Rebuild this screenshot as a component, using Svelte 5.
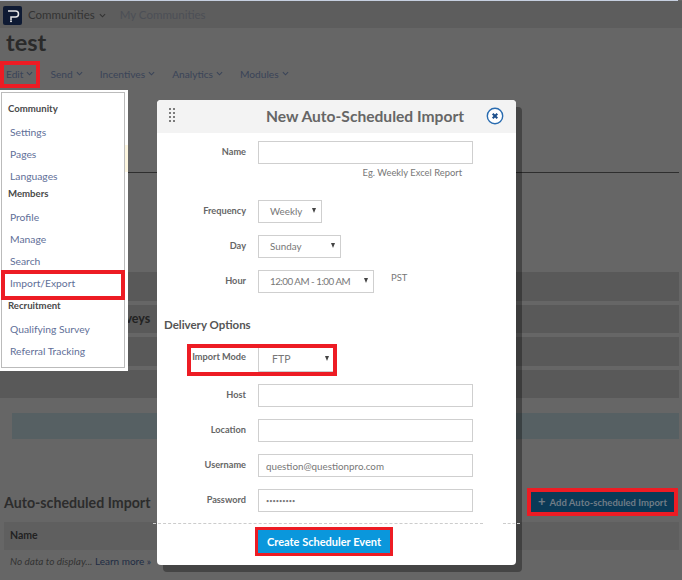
<script>
  const nav = ['Edit', 'Send', 'Incentives', 'Analytics', 'Modules'];
  const menu = [
    { head: 'Community', items: ['Settings', 'Pages', 'Languages'] },
    { head: 'Members', items: ['Profile', 'Manage', 'Search', 'Import/Export'] },
    { head: 'Recruitment', items: ['Qualifying Survey', 'Referral Tracking'] }
  ];
  const dots = [0, 1, 2, 3, 4, 5, 6, 7];
</script>

<div class="page">
  <div class="topline"></div>
  <header class="topbar">
    <svg class="logo" viewBox="0 0 19 19" aria-hidden="true">
      <rect width="19" height="19" rx="2" fill="#0e1a33" />
      <path d="M5 5h7.5a2.5 2.5 0 0 1 0 6H8v3" fill="none" stroke="#e6e6e6" stroke-width="1.5" />
      <circle cx="8" cy="15.2" r="1" fill="#e6e6e6" />
    </svg>
    <span class="brand">Communities</span>
    <svg class="chev brandchev" viewBox="0 0 8 5"><path d="M1 1l3 3 3-3" /></svg>
    <span class="mine">My Communities</span>
  </header>

  <h1 class="title">test</h1>

  <nav class="nav">
    {#each nav as item, i}
      <span class="navitem" class:marked={i === 0}>
        {item}
        <svg class="chev" viewBox="0 0 8 5"><path d="M1 1l3 3 3-3" /></svg>
      </span>
    {/each}
  </nav>

  <div class="rule"></div>

  <div class="bands">
    <div class="band"></div>
    <div class="band"><b class="bandlabel">Surveys</b></div>
    <div class="band"></div>
    <div class="band"></div>
  </div>

  <div class="info"></div>

  <section class="section">
    <h2>Auto-scheduled Import</h2>
    <button class="add"><span class="plus">+</span> Add Auto-scheduled Import</button>
  </section>

  <div class="thead">Name</div>
  <p class="empty"><i>No data to display...</i> <span>Learn more »</span></p>

  <aside class="menu">
    <div class="menuinner">
      {#each menu as group}
        <div class="mhead">{group.head}</div>
        <ul>
          {#each group.items as it}
            <li class:marked={it === 'Import/Export'}>{it}</li>
          {/each}
        </ul>
      {/each}
    </div>
  </aside>

  <div class="modal">
    <div class="mtop">
      <div class="grip">
        {#each dots as d}<i></i>{/each}
      </div>
      <div class="mtitle">New Auto-Scheduled Import</div>
      <svg class="close" viewBox="0 0 18 18" aria-hidden="true">
        <circle cx="9" cy="9" r="7.7" fill="#fff" stroke="#2a6cb0" stroke-width="1.4" />
        <path d="M6.7 6.7l4.6 4.6M11.3 6.7l-4.6 4.6" stroke="#1c4f8c" stroke-width="2" />
      </svg>
    </div>

    <div class="mbody">
      <div class="row"><span class="label">Name</span><input class="field" /></div>
      <div class="hint">Eg. Weekly Excel Report</div>

      <div class="row freq"><span class="label">Frequency</span><div class="select w64"><span>Weekly</span><b></b></div></div>
      <div class="row"><span class="label">Day</span><div class="select w83"><span>Sunday</span><b></b></div></div>
      <div class="row"><span class="label">Hour</span><div class="select w116"><span class="hourtext">12:00 AM - 1:00 AM</span><b></b></div><span class="pst">PST</span></div>

      <div class="delivery">Delivery Options</div>

      <div class="row mode"><span class="label">Import Mode</span><div class="select w76 ftp"><span>FTP</span><b></b></div></div>
      <div class="row"><span class="label">Host</span><input class="field" /></div>
      <div class="row"><span class="label">Location</span><input class="field" /></div>
      <div class="row"><span class="label">Username</span><input class="field" value="question@questionpro.com" /></div>
      <div class="row"><span class="label">Password</span><input class="field pass" type="password" value="123456789" /></div>
    </div>

    <div class="mfoot">
      <button class="create">Create Scheduler Event</button>
    </div>
  </div>
</div>

<style>
  :global(body) {
    margin: 0;
  }
  .page {
    position: relative;
    width: 682px;
    height: 580px;
    overflow: hidden;
    background: #666;
    font-family: Lato, "Noto Sans", sans-serif;
    color: #2b2b2b;
  }
  .topline {
    height: 1px;
    width: 678px;
    background: #c6cfe0;
  }
  .topbar {
    height: 27px;
    background: #5d5d5d;
    display: flex;
    align-items: center;
    padding-left: 3px;
    box-sizing: border-box;
    padding-top: 2px;
  }
  .logo {
    width: 19px;
    height: 19px;
    flex: none;
  }
  .brand {
    margin: 0 0 2px 6px;
    font-size: 11.5px;
    color: #333;
  }
  .brandchev {
    margin-left: 4px;
    color: #333;
  }
  .mine {
    margin: 0 0 2px 14px;
    font-size: 11.5px;
    color: #4c4f56;
  }
  .chev {
    width: 7px;
    height: 5px;
    fill: none;
    stroke: currentColor;
    stroke-width: 1.2;
  }
  .title {
    margin: 0;
    height: 29px;
    line-height: 29px;
    padding-left: 6px;
    font-size: 23.5px;
    font-weight: 700;
    color: #2a2a2a;
  }
  .nav {
    display: flex;
    margin-top: 8px;
    height: 19px;
    padding-left: 4px;
    gap: 13px;
    align-items: center;
  }
  .navitem {
    display: flex;
    align-items: center;
    gap: 3px;
    height: 17px;
    padding: 0 2px 2px;
    font-size: 10.2px;
    color: #3a4458;
  }
  .navitem.marked {
    outline: 4px solid #ed1c24;
    margin-right: -1px;
    padding-right: 3px;
  }
  .rule {
    height: 1px;
    margin-top: 88px;
    margin-right: 3px;
    background: #2e2e2e;
  }
  .bands {
    margin-top: 99px;
    margin-right: 3px;
    display: flex;
    flex-direction: column;
    gap: 4px;
  }
  .band {
    height: 28.6px;
    background: #595959;
    display: flex;
    align-items: center;
  }
  .bandlabel {
    margin-left: 107px;
    font-size: 12.5px;
    font-weight: 700;
    color: #222;
  }
  .info {
    height: 26px;
    margin: 15px 3px 0 12px;
    background: #566063;
  }
  .section {
    height: 20px;
    margin: 53px 8px 0 4px;
    display: flex;
    align-items: center;
    justify-content: space-between;
  }
  .section h2 {
    margin: 0;
    font-size: 14.2px;
    font-weight: 700;
    color: #2c2c2c;
    white-space: nowrap;
  }
  .add {
    width: 143px;
    height: 20px;
    padding: 0 0 3px;
    border: 0;
    background: #0b3a57;
    color: #6f7c86;
    font: 700 9.5px Lato, sans-serif;
    outline: 4px solid #ed1c24;
  }
  .plus {
    font-size: 13px;
    margin-right: 2px;
  }
  .thead {
    height: 28px;
    margin: 10px 3px 0 4px;
    padding-left: 6px;
    line-height: 27px;
    background: #5f5f5f;
    font-size: 10.5px;
    font-weight: 700;
    color: #222;
  }
  .empty {
    margin: 4px 0 0 10px;
    font-size: 10px;
    line-height: 14px;
    color: #333;
  }
  .empty span {
    color: #1e2c44;
  }

  .menu {
    position: absolute;
    left: 0;
    top: 90px;
    width: 128px;
    height: 281px;
    box-sizing: border-box;
    padding: 2px 3px 3px 1px;
    background: #fff;
  }
  .menu::before {
    content: "";
    position: absolute;
    left: 125px;
    top: 55px;
    width: 3px;
    height: 27px;
    background: #fdf6e0;
  }
  .menuinner {
    height: 100%;
    box-sizing: border-box;
    border: 1px solid #bbb;
    padding-top: 9px;
  }
  .mhead {
    margin: 1px 0 0 6px;
    height: 12px;
    line-height: 12px;
    font-size: 9.6px;
    font-weight: 700;
    color: #4a4a4a;
  }
  .menu ul {
    list-style: none;
    margin: 6px 0 0;
    padding: 0;
  }
  .menu li {
    height: 22px;
    line-height: 22px;
    padding-left: 8px;
    font-size: 10.3px;
    color: #5f6f98;
  }
  .menu li.marked {
    outline: 4px solid #ed1c24;
    margin: 2px 3px 4px;
    padding-left: 5px;
    line-height: 18px;
  }

  .modal {
    position: absolute;
    left: 157px;
    top: 100px;
    width: 359px;
    height: 465px;
    background: #fff;
    border-radius: 4px;
    box-shadow: 6px 7px 0 rgba(0, 0, 0, 0.32);
  }
  .mtop {
    position: relative;
    height: 33px;
    background: #f3f3f3;
    border-radius: 4px 4px 0 0;
    display: flex;
    align-items: center;
    justify-content: flex-end;
    padding-right: 52px;
    padding-bottom: 2px;
    box-sizing: border-box;
  }
  .grip {
    position: absolute;
    left: 12px;
    top: 8px;
    display: grid;
    grid-template-columns: 2px 2px;
    grid-auto-rows: 2px;
    gap: 2px;
  }
  .grip i {
    background: #555;
    border-radius: 1px;
  }
  .mtitle {
    font-size: 15.6px;
    font-weight: 700;
    color: #666;
    white-space: nowrap;
  }
  .close {
    position: absolute;
    left: 329px;
    top: 7px;
    width: 18px;
    height: 18px;
  }
  .mbody {
    padding-top: 8px;
    display: flex;
    flex-direction: column;
    gap: 12px;
  }
  .row {
    display: flex;
    align-items: center;
    height: 23px;
    gap: 12px;
  }
  .label {
    width: 89px;
    text-align: right;
    font-size: 9.2px;
    font-weight: 700;
    color: #666;
    flex: none;
    padding-bottom: 3px;
    box-sizing: border-box;
  }
  .field {
    width: 215px;
    height: 23px;
    box-sizing: border-box;
    border: 1px solid #cfcfcf;
    padding: 0 7px;
    background: #fff;
    color: #777;
    font: 9.8px Lato, sans-serif;
    outline: none;
    margin: 0;
  }
  .pass {
    font-size: 5.6px;
    letter-spacing: 0;
  }
  .hint {
    margin-top: -10px;
    height: 14px;
    line-height: 14px;
    width: 305px;
    text-align: right;
    font-size: 9.4px;
    color: #777;
  }
  .freq {
    margin-top: 8px;
  }
  .select {
    height: 23px;
    box-sizing: border-box;
    border: 1px solid #cfcfcf;
    display: flex;
    align-items: center;
    justify-content: space-between;
    padding: 0 5px 2px 11px;
    font-size: 9.8px;
    color: #777;
    white-space: nowrap;
  }
  .select b {
    width: 0;
    height: 0;
    border-left: 2.5px solid transparent;
    border-right: 2.5px solid transparent;
    border-top: 5px solid #444;
  }
  .hourtext {
    letter-spacing: -0.5px;
  }
  .w64 { width: 64px; }
  .w83 { width: 83px; }
  .w116 { width: 116px; }
  .w76 { width: 76px; }
  .pst {
    margin: 0 0 8px 5px;
    font-size: 9.5px;
    color: #777;
  }
  .delivery {
    margin: 13px 0 0 7px;
    height: 14px;
    line-height: 14px;
    font-size: 11.5px;
    font-weight: 700;
    color: #555;
  }
  .mode {
    position: relative;
    margin-top: 4px;
    height: 24px;
  }
  .mode .label {
    padding-bottom: 8px;
  }
  .mode::after {
    content: "";
    position: absolute;
    left: 30px;
    top: -4px;
    width: 150px;
    height: 32px;
    box-sizing: border-box;
    border: 4px solid #ed1c24;
    pointer-events: none;
  }
  .ftp {
    height: 24px;
    border-top: 0;
    border-right: 0;
    font-size: 10.5px;
    padding-left: 13px;
  }
  .mfoot {
    position: absolute;
    left: 0;
    top: 423px;
    padding: 7px 0 0 101px;
  }
  .mfoot::before {
    content: "";
    position: absolute;
    left: -4px;
    width: 330px;
    top: 0;
    border-top: 1px dashed #ccc;
  }
  .mfoot::after {
    content: "";
    position: absolute;
    left: 346px;
    width: 17px;
    top: 0;
    border-top: 1px dashed #ccc;
  }
  .create {
    display: block;
    width: 132px;
    height: 23px;
    padding: 0 0 1px;
    border: 0;
    background: #0a97dc;
    color: #fff;
    font: 700 11px Lato, sans-serif;
    outline: 3px solid #ed1c24;
  }
</style>
